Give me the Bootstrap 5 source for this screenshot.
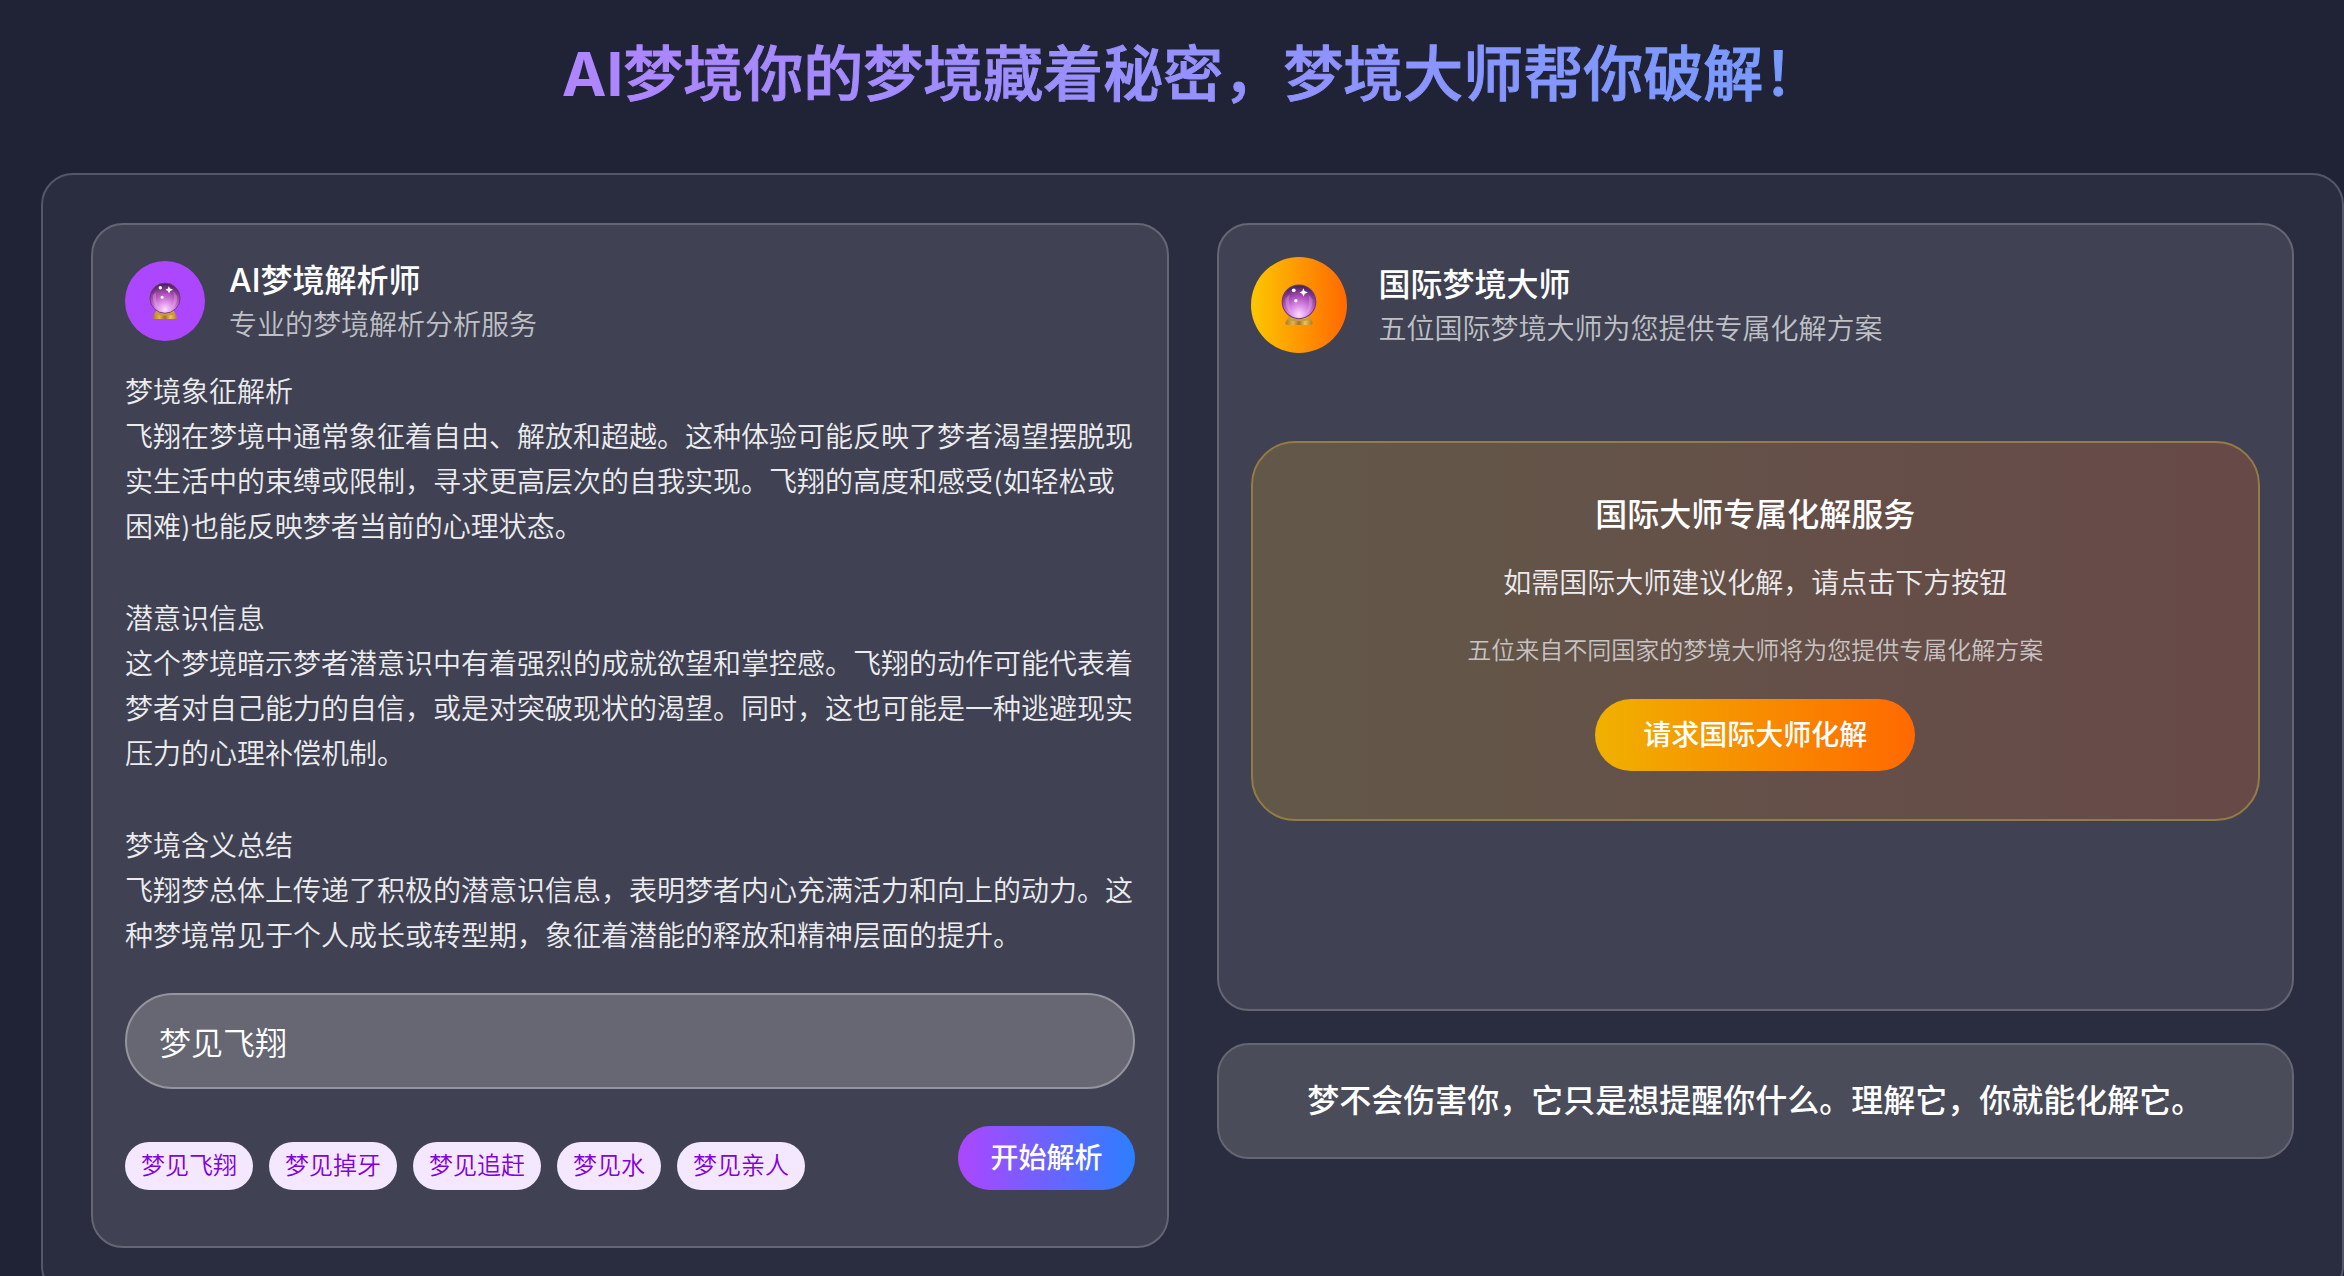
<!DOCTYPE html>
<html lang="zh-CN">
<head>
<meta charset="utf-8">
<meta name="viewport" content="width=device-width, initial-scale=1">
<title>AI梦境</title>
<link href="https://cdn.jsdelivr.net/npm/bootstrap@5.3.0/dist/css/bootstrap.min.css" rel="stylesheet">
<style>
  body { background: #202236; color: #fff; font-family: Inter, "Noto Sans CJK SC", sans-serif; overflow-x: hidden; }
  .page-wrap { padding: 32px 0 48px 41px; }
  .hero-title { font-size: 60px; line-height: 84px; font-weight: 500; margin-bottom: 57px; color: transparent;
    background-image: linear-gradient(90deg, #c27aff, #51a2ff);
    background-image: linear-gradient(90deg in oklab, #c27aff, #51a2ff);
    -webkit-background-clip: text; background-clip: text; -webkit-text-stroke: 1px transparent; }
  .hero-title span { -webkit-text-stroke: 0; }
  .outer-panel { background: #2a2c3f; border: 2px solid #54566a; border-radius: 32px; padding: 48px; }
  .glass { background: #404253; border: 2px solid #646674; border-radius: 32px; padding: 32px; }
  .panel-grid { display: grid; grid-template-columns: repeat(auto-fit, minmax(min(100%, 700px), 1fr)); gap: 48px; }
  .wide-gap { gap: 32px; }
  .avatar { width: 80px; height: 80px; background: #ad46ff; }
  .avatar-lg { width: 96px; height: 96px; background: linear-gradient(90deg, #fdc700, #ff6900); }
  .name { font-size: 32px; line-height: 48px; font-weight: 500; }
  .role { font-size: 28px; line-height: 40px; color: #bfc0c5; font-weight: 350; }
  .reading { margin: 25px 0 34px; gap: 47px; font-size: 28px; line-height: 45px; color: #ececee; font-weight: 350; }
  .dream-input { height: 96px; border: 2px solid #94959e; background: #666773; color: #fff; font-size: 32px; font-weight: 350; padding: 0 32px; }
  .dream-input:focus { background: #666773; color: #fff; border-color: #c27aff; box-shadow: none; }
  .actions { margin: 37px 0 24px; }
  .chip { border: 0; background: #f3e8ff; color: #8200db; font-size: 24px; line-height: 32px; font-weight: 350; padding: 8px 16px; }
  .go, .go:hover { background: linear-gradient(90deg, #ad46ff, #2b7fff); color: #fff; border: 0; font-size: 28px; line-height: 40px; font-weight: 500; padding: 12px 32px; }
  .ask, .ask:hover { background: linear-gradient(90deg, #f0b100, #ff6900); color: #fff; border: 0; font-size: 28px; line-height: 40px; font-weight: 500; padding: 16px 48px; }
  .service { margin: 88px 0 156px; padding: 48px; border: 2px solid #957b44; border-radius: 44px; background: linear-gradient(90deg, #625848, #674948); }
  .lead-line { font-size: 28px; line-height: 40px; color: #ececee; font-weight: 350; margin-bottom: 32px; }
  .note-line { font-size: 24px; line-height: 32px; color: #c8c3c3; font-weight: 350; margin-bottom: 32px; }
  .quote { background: #4b4c5a; }
</style>
</head>
<body>
<svg width="0" height="0" class="position-absolute" aria-hidden="true">
  <defs>
    <radialGradient id="orb" cx="50%" cy="88%" r="85%">
      <stop offset="0" stop-color="#fbdcff"/><stop offset=".32" stop-color="#db8de8"/>
      <stop offset=".65" stop-color="#a94cb4"/><stop offset="1" stop-color="#4a2059"/>
    </radialGradient>
    <linearGradient id="stand" x1="0" x2="1">
      <stop offset="0" stop-color="#a87a22"/><stop offset=".28" stop-color="#e6b544"/><stop offset=".5" stop-color="#a56e2a"/>
      <stop offset=".72" stop-color="#edc458"/><stop offset="1" stop-color="#a87a22"/>
    </linearGradient>
    <symbol id="crystal" viewBox="0 0 36 40">
      <path d="M9 30h18l4 7q0 2-2 2H7q-2 0-2-2z" fill="url(#stand)"/>
      <circle cx="18" cy="17" r="16" fill="url(#orb)" stroke="#6b3c74" stroke-width="1"/>
      <path d="M8 32q10 3 20 0l1 2q-11 3-22 0z" fill="#c99a3c"/>
      <path d="M5 14Q5 25 12 29Q7 20 9 10z" fill="#f3c4f5" opacity=".3"/>
      <path d="M31 15Q31 25 24 29Q29 21 27 10z" fill="#f3c4f5" opacity=".3"/>
      <circle cx="13" cy="6" r="1.800" fill="#fff"/>
      <path d="M22 4l1.300 2.700L26.500 8l-3 1.400L22.300 12l-1.300-2.600L18.500 8l2.700-1.300z" fill="#fff"/>
      <circle cx="15" cy="16" r="1.600" fill="#fff"/>
    </symbol>
  </defs>
</svg>
<main class="page-wrap">
  <h1 class="hero-title text-center"><span class="fw-bold">AI</span>梦境你的梦境藏着秘密，梦境大师帮你破解！</h1>
  <div class="outer-panel">
    <div class="panel-grid align-items-start">
      <section class="glass">
        <header class="d-flex align-items-center gap-4">
          <div class="avatar rounded-circle d-flex align-items-center justify-content-center flex-shrink-0"><svg width="34" height="38" aria-hidden="true"><use href="#crystal"/></svg></div>
          <div>
            <h2 class="name mb-0">AI梦境解析师</h2>
            <p class="role mb-0">专业的梦境解析分析服务</p>
          </div>
        </header>
        <div class="reading d-flex flex-column">
          <div>梦境象征解析<br>飞翔在梦境中通常象征着自由、解放和超越。这种体验可能反映了梦者渴望摆脱现实生活中的束缚或限制，寻求更高层次的自我实现。飞翔的高度和感受(如轻松或困难)也能反映梦者当前的心理状态。</div>
          <div>潜意识信息<br>这个梦境暗示梦者潜意识中有着强烈的成就欲望和掌控感。飞翔的动作可能代表着梦者对自己能力的自信，或是对突破现状的渴望。同时，这也可能是一种逃避现实压力的心理补偿机制。</div>
          <div>梦境含义总结<br>飞翔梦总体上传递了积极的潜意识信息，表明梦者内心充满活力和向上的动力。这种梦境常见于个人成长或转型期，象征着潜能的释放和精神层面的提升。</div>
        </div>
        <input type="text" aria-label="梦境" class="dream-input form-control rounded-pill" value="梦见飞翔">
        <div class="actions d-flex justify-content-between align-items-end gap-3">
          <div class="d-flex flex-wrap gap-3">
            <button type="button" class="chip rounded-pill">梦见飞翔</button>
            <button type="button" class="chip rounded-pill">梦见掉牙</button>
            <button type="button" class="chip rounded-pill">梦见追赶</button>
            <button type="button" class="chip rounded-pill">梦见水</button>
            <button type="button" class="chip rounded-pill">梦见亲人</button>
          </div>
          <button type="button" class="go btn rounded-pill flex-shrink-0">开始解析</button>
        </div>
      </section>
      <div class="d-flex flex-column wide-gap">
        <section class="glass">
          <header class="d-flex align-items-center wide-gap">
            <div class="avatar avatar-lg rounded-circle d-flex align-items-center justify-content-center flex-shrink-0"><svg width="38" height="42" aria-hidden="true"><use href="#crystal"/></svg></div>
            <div>
              <h2 class="name mb-0">国际梦境大师</h2>
              <p class="role mb-0">五位国际梦境大师为您提供专属化解方案</p>
            </div>
          </header>
          <div class="service text-center">
            <h3 class="name mb-4">国际大师专属化解服务</h3>
            <p class="lead-line">如需国际大师建议化解，请点击下方按钮</p>
            <p class="note-line">五位来自不同国家的梦境大师将为您提供专属化解方案</p>
            <button type="button" class="ask btn rounded-pill">请求国际大师化解</button>
          </div>
        </section>
        <p class="glass quote name text-center mb-0">梦不会伤害你，它只是想提醒你什么。理解它，你就能化解它。</p>
      </div>
    </div>
  </div>
</main>
<script src="https://cdn.jsdelivr.net/npm/bootstrap@5.3.0/dist/js/bootstrap.bundle.min.js"></script>
</body>
</html>
